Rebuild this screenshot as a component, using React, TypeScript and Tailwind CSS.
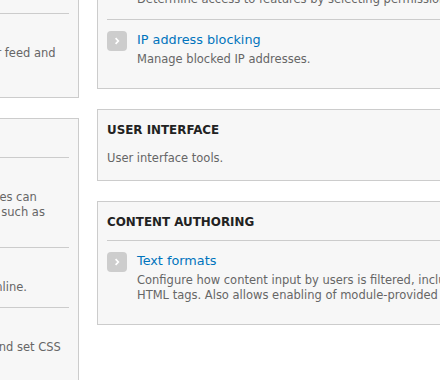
import React from 'react';

type Item = { title: string; description: string };

type Panel = { heading: string; items?: Item[]; description?: string };

const leftPanels: Panel[] = [
  {
    heading: 'Web services',
    items: [
      {
        title: 'RSS publishing',
        description:
          'Configure the site description, the number of items per feed and whether feeds should be titles/teasers/full-text.',
      },
    ],
  },
  {
    heading: 'Development',
    items: [
      {
        title: 'Logging and errors',
        description:
          "Settings for logging and alerts modules. Various modules can route Drupal's system events to different destinations, such as syslog, database, email, etc.",
      },
      {
        title: 'Maintenance mode',
        description: 'Take the site offline for maintenance or bring it back online.',
      },
      {
        title: 'Performance',
        description:
          'Enable or disable page caching for anonymous users and set CSS and JS bandwidth optimization options.',
      },
    ],
  },
];

const rightPanels: Panel[] = [
  {
    heading: 'People',
    items: [
      {
        title: 'Permissions',
        description: 'Determine access to features by selecting permissions for roles.',
      },
      { title: 'IP address blocking', description: 'Manage blocked IP addresses.' },
    ],
  },
  { heading: 'User interface', description: 'User interface tools.' },
  {
    heading: 'Content authoring',
    items: [
      {
        title: 'Text formats',
        description:
          'Configure how content input by users is filtered, including allowed HTML tags. Also allows enabling of module-provided filters.',
      },
    ],
  },
];

function ArrowIcon() {
  return (
    <span className="mt-[1px] flex h-5 w-5 shrink-0 items-center justify-center rounded-[4px] bg-[#cdcdcd]">
      <svg width="6" height="8" viewBox="0 0 6 8" fill="none">
        <path d="M1.6 1.2 L4.3 4 L1.6 6.8" stroke="#ffffff" strokeWidth="1.7" />
      </svg>
    </span>
  );
}

function AdminPanel({ panel }: { panel: Panel }) {
  return (
    <div className="mb-5 border border-[#cccccc] bg-[#f7f7f7] px-[9px]">
      <h3
        className={
          'pt-[12px] text-[11.9px] font-bold uppercase leading-[16px] text-[#222222] ' +
          (panel.items ? 'border-b border-[#cccccc] pb-[10px]' : 'pb-[13px]')
        }
      >
        {panel.heading}
      </h3>
      {panel.description && (
        <div className="pb-[14px] text-[11.5px] leading-[15px] text-[#666666]">{panel.description}</div>
      )}
      {panel.items && (
        <ul className="pb-[9px]">
          {panel.items.map((item, i) => (
            <li
              key={item.title}
              className={'flex gap-[10px] pt-[10px] pb-[12px] ' + (i > 0 ? 'border-t border-[#cccccc]' : '')}
            >
              <ArrowIcon />
              <div>
                <a className="block text-[12.8px] leading-[20px] text-[#0074bd]">{item.title}</a>
                <div className="mt-[2px] text-[11.5px] leading-[15px] text-[#666666]">{item.description}</div>
              </div>
            </li>
          ))}
        </ul>
      )}
    </div>
  );
}

export default function App() {
  return (
    <div className="h-[380px] w-[440px] overflow-hidden bg-white font-['DejaVu_Sans',sans-serif]">
      <div className="ml-[-357px] flex items-start gap-[18px]">
        <div className="mt-[-26px] w-[436px] shrink-0">
          {leftPanels.map((p) => (
            <AdminPanel key={p.heading} panel={p} />
          ))}
        </div>
        <div className="mt-[-80px] w-[433px] shrink-0">
          {rightPanels.map((p) => (
            <AdminPanel key={p.heading} panel={p} />
          ))}
        </div>
      </div>
    </div>
  );
}
